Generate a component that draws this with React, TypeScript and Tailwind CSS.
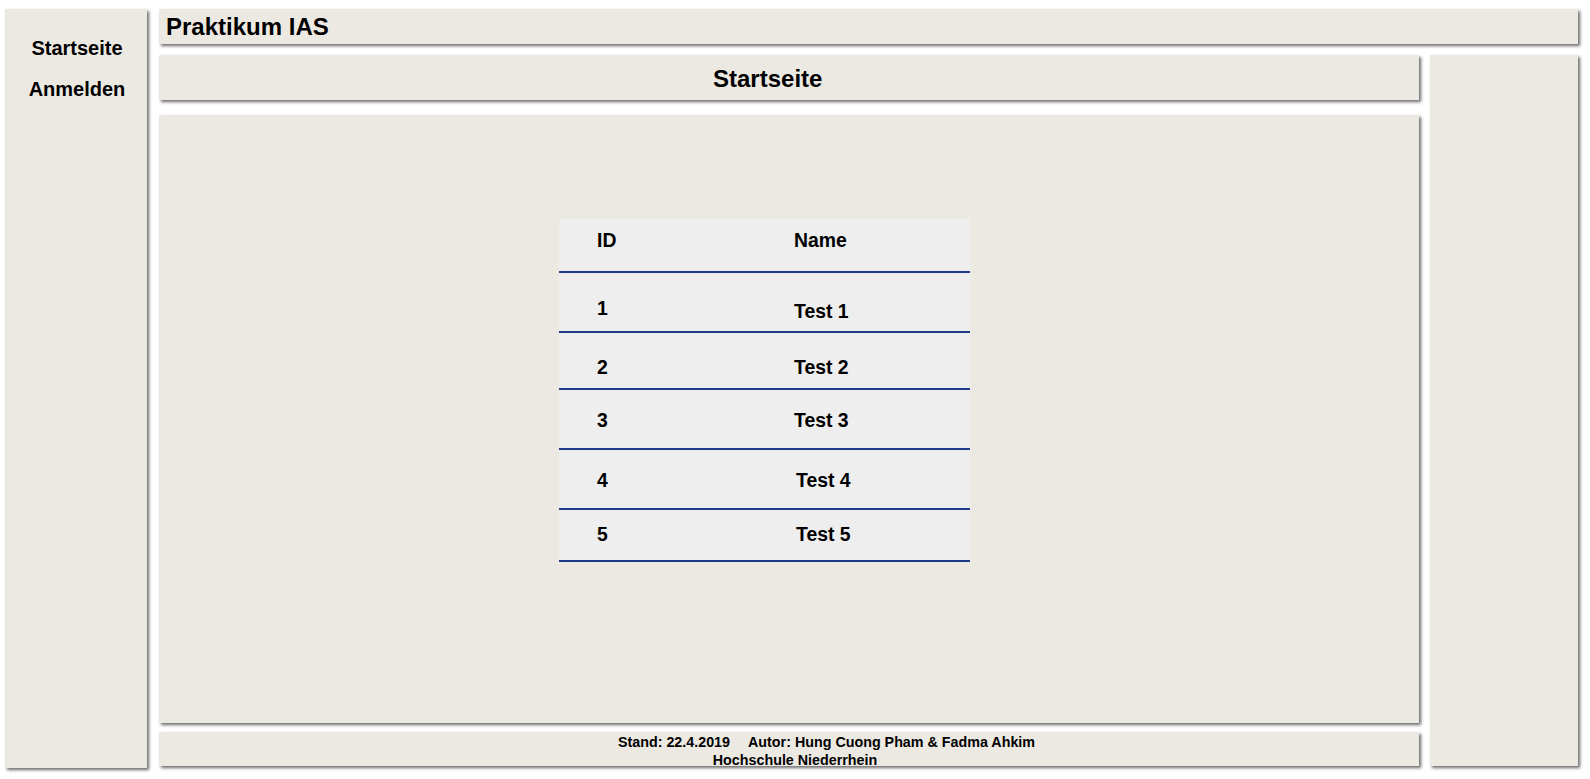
const rows = [
  { id: "1", name: "Test 1", h: "h-[60px]", idPt: "pt-[24px]", namePt: "pt-[27px]", shift: "" },
  { id: "2", name: "Test 2", h: "h-[57px]", idPt: "pt-[23px]", namePt: "pt-[23px]", shift: "" },
  { id: "3", name: "Test 3", h: "h-[60px]", idPt: "pt-[19px]", namePt: "pt-[19px]", shift: "" },
  { id: "4", name: "Test 4", h: "h-[60px]", idPt: "pt-[19px]", namePt: "pt-[19px]", shift: "pl-[2px]" },
  { id: "5", name: "Test 5", h: "h-[52px]", idPt: "pt-[13px]", namePt: "pt-[13px]", shift: "pl-[2px]" },
];

const box = "bg-[#ece9e2] shadow-[2px_2px_3px_#6b6b6b]";

export default function App() {
  return (
    <div className="flex min-h-screen bg-white pl-[5px] pt-[9px] font-['Liberation_Sans',Arial,sans-serif] font-bold text-black">
      <nav className={`${box} flex h-[759px] w-[142px] flex-col items-center gap-[18px] pl-[2px] pt-[28px] text-[20px] leading-[23px]`}>
        <a href="#">Startseite</a>
        <a href="#">Anmelden</a>
      </nav>

      <div className="ml-[12px] flex w-[1419px] flex-col">
        <header className={`${box} h-[35px] pl-[7px] pt-[4px] text-[24px] leading-[27px]`}>
          Praktikum IAS
        </header>

        <div className="mt-[11px] flex">
          <div className="flex w-[1260px] flex-col">
            <div className={`${box} h-[45px] pl-[554px] pt-[10px] text-[24px] leading-[27px]`}>
              Startseite
            </div>

            <main className={`${box} mt-[15px] h-[608px] pl-[400px] pt-[104px]`}>
              <div className="w-[411px] bg-[#eeeeee] text-[19.4px] leading-[22px]">
                <div className="flex h-[54px] border-b-2 border-[#203a8a]">
                  <div className="w-[235px] pl-[38px] pt-[10px]">ID</div>
                  <div className="pt-[10px]">Name</div>
                </div>
                {rows.map((r) => (
                  <div key={r.id} className={`flex ${r.h} border-b-2 border-[#203a8a]`}>
                    <div className={`w-[235px] pl-[38px] ${r.idPt}`}>{r.id}</div>
                    <div className={`${r.namePt} ${r.shift}`}>{r.name}</div>
                  </div>
                ))}
              </div>
            </main>

            <footer className={`${box} mt-[9px] flex h-[34px] flex-col items-center pt-[1px] text-[14.3px] leading-[18px]`}>
              <div className="pl-[75px]">
                Stand: 22.4.2019
                <span className="inline-block w-[18px]" />
                Autor: Hung Cuong Pham &amp; Fadma Ahkim
              </div>
              <div className="pl-[12px]">Hochschule Niederrhein</div>
            </footer>
          </div>

          <aside className={`${box} ml-[11px] h-[711px] w-[148px]`} />
        </div>
      </div>
    </div>
  );
}
